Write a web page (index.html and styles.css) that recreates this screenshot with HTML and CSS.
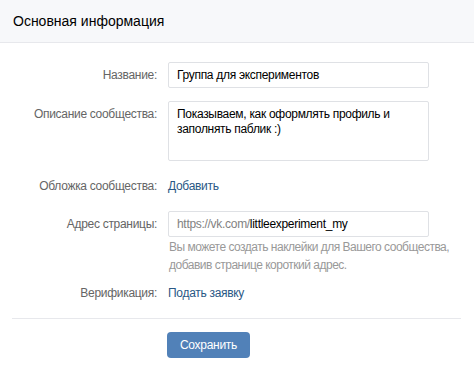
FILE: index.html
```html
<!DOCTYPE html>
<html>
    <head>
        <title>Основная информация</title>
        <link rel="stylesheet" href="styles.css">
    </head>
    <body>
        <div class="page">
            <div class="page-header">Основная информация</div>

            <div class="form">
                <div class="row">
                    <div class="label">Название:</div>
                    <div class="field"><div class="input">Группа для экспериментов</div></div>
                </div>
                <div class="row">
                    <div class="label">Описание сообщества:</div>
                    <div class="field"><div class="input textarea">Показываем, как оформлять профиль и заполнять паблик :)</div></div>
                </div>
                <div class="row row-link">
                    <div class="label">Обложка сообщества:</div>
                    <div class="field"><a class="link">Добавить</a></div>
                </div>
                <div class="row row-address">
                    <div class="label">Адрес страницы:</div>
                    <div class="field">
                        <div class="input"><span class="prefix">https://vk.com/</span>littleexperiment_my</div>
                        <div class="hint">Вы можете создать наклейки для Вашего сообщества, добавив странице короткий адрес.</div>
                    </div>
                </div>
                <div class="row row-link row-verify">
                    <div class="label">Верификация:</div>
                    <div class="field"><a class="link">Подать заявку</a></div>
                </div>
            </div>

            <div class="footer">
                <button class="button">Сохранить</button>
            </div>
        </div>
    </body>
</html>
```

FILE: styles.css
```css
body {
    margin: 0;
    background: #fff;
    font-family: "Liberation Sans", Arial, sans-serif;
    font-size: 12px;
    letter-spacing: -0.3px;
    color: #000;
}

.page-header {
    height: 43px;
    box-sizing: border-box;
    padding: 13px 0 0 13px;
    background: #f7f8fa;
    border-bottom: 1px solid #e7e8ec;
    font-size: 14px;
    letter-spacing: 0;
    color: #000;
}

/* rows are spaced by margin-top only, so they line up with the screenshot */
.form {
    padding-top: 19px;
}

.row {
    display: flex;
    align-items: flex-start;
    margin-top: 13px;
}

.row:first-child {
    margin-top: 0;
}

.row-link {
    margin-top: 18px;
}

.row-address {
    margin-top: 17px;
}

.row-verify {
    margin-top: 12px;
}

.label {
    width: 157px;
    flex: none;
    text-align: right;
    color: #656565;
    padding-top: 6px;
    line-height: 15px;
}

.row-link .label {
    padding-top: 0;
}

.field {
    margin-left: 11px;
    width: 261px;
}

.input {
    box-sizing: border-box;
    height: 26px;
    padding: 5px 8px 0;
    border: 1px solid #dfe1e5;
    border-radius: 2px;
    line-height: 15px;
}

.textarea {
    height: 60px;
}

.prefix {
    color: #828282;
}

.hint {
    width: 285px;
    margin-top: 1px;
    padding-left: 1px;
    color: #999;
    line-height: 18px;
    letter-spacing: -0.5px;
}

.link {
    color: #2a5885;
    line-height: 15px;
}

.footer {
    margin: 17px 13px 0 12px;
    border-top: 1px solid #e7e8ec;
    padding: 13px 0 0 155px;
}

.button {
    height: 26px;
    padding: 0 13px;
    border: 0;
    border-radius: 4px;
    background: #5181b8;
    color: #fff;
    font-family: inherit;
    font-size: 12px;
    letter-spacing: -0.3px;
}
```
